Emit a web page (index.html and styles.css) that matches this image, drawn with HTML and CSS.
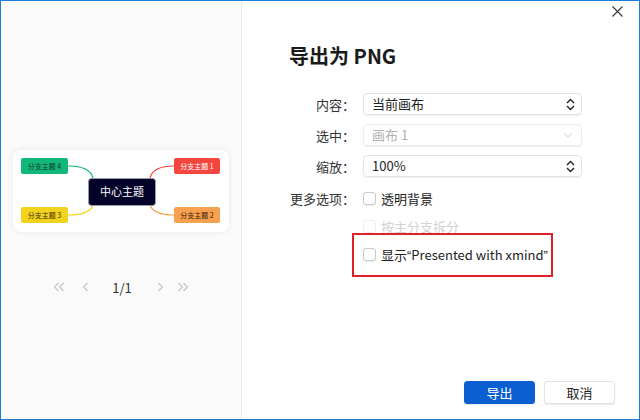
FILE: index.html
```html
<!DOCTYPE html>
<html lang="zh-CN">
<head>
    <meta charset="UTF-8">
    <title>导出为 PNG</title>
    <link rel="stylesheet" href="styles.css">
</head>
<body>
<div class="window">
    <div class="preview">
        <div class="map-card">
            <svg width="216" height="82" viewBox="0 0 216 82">
                <path d="M55 16 C70 16 78 20 80 28" class="link" stroke="#12b87a"/>
                <path d="M55 65 C70 65 78 61 80 55" class="link" stroke="#f3d21e"/>
                <path d="M161 16 C146 16 139 20 137 28" class="link" stroke="#f5453f"/>
                <path d="M161 65 C146 65 139 61 137 55" class="link" stroke="#f7a050"/>

                <rect x="8" y="8" width="47" height="16" rx="2" fill="#12b87a"/>
                <text x="31.5" y="19" class="branch" fill="#143b2a">分支主题 4</text>
                <rect x="8" y="57" width="47" height="16" rx="2" fill="#f3d21e"/>
                <text x="31.5" y="68" class="branch" fill="#3a3000">分支主题 3</text>
                <rect x="161" y="8" width="46" height="16" rx="2" fill="#f5453f"/>
                <text x="184" y="19" class="branch" fill="#fff">分支主题 1</text>
                <rect x="161" y="57" width="46" height="16" rx="2" fill="#f7a050"/>
                <text x="184" y="68" class="branch" fill="#3b2000">分支主题 2</text>

                <rect x="75.5" y="28.5" width="67" height="27" rx="3" fill="#05032a" stroke="#9a9aaa"/>
                <text x="109" y="46" class="center">中心主题</text>
            </svg>
        </div>
        <div class="pager">
            <svg class="pg" width="12" height="10" viewBox="0 0 12 10"><path d="M5.5 1 L1.5 5 L5.5 9 M10.5 1 L6.5 5 L10.5 9"/></svg>
            <svg class="pg" width="8" height="10" viewBox="0 0 8 10"><path d="M5.5 1 L1.5 5 L5.5 9"/></svg>
            <span class="page-num">1/1</span>
            <svg class="pg" width="8" height="10" viewBox="0 0 8 10"><path d="M2.5 1 L6.5 5 L2.5 9"/></svg>
            <svg class="pg" width="12" height="10" viewBox="0 0 12 10"><path d="M1.5 1 L5.5 5 L1.5 9 M6.5 1 L10.5 5 L6.5 9"/></svg>
        </div>
    </div>

    <div class="main">
        <svg class="close" width="11" height="11" viewBox="0 0 11 11"><path d="M0.5 0.5 L10.5 10.5 M10.5 0.5 L0.5 10.5"/></svg>

        <h2 class="title">导出为 PNG</h2>

        <div class="form">
            <div class="row">
                <span class="label">内容：</span>
                <div class="select">
                    <span>当前画布</span>
                    <svg class="updown" width="9" height="13" viewBox="0 0 9 13"><path d="M1 5 L4.5 1.5 L8 5 M1 8 L4.5 11.5 L8 8"/></svg>
                </div>
            </div>
            <div class="row">
                <span class="label">选中：</span>
                <div class="select disabled">
                    <span>画布 1</span>
                    <svg class="down" width="10" height="6" viewBox="0 0 10 6"><path d="M1 1 L5 5 L9 1"/></svg>
                </div>
            </div>
            <div class="row">
                <span class="label">缩放：</span>
                <div class="select">
                    <span>100%</span>
                    <svg class="updown" width="9" height="13" viewBox="0 0 9 13"><path d="M1 5 L4.5 1.5 L8 5 M1 8 L4.5 11.5 L8 8"/></svg>
                </div>
            </div>

            <div class="row check first">
                <span class="label">更多选项：</span>
                <label class="checkbox"><span class="box"></span>透明背景</label>
            </div>
            <div class="row check">
                <span class="label"></span>
                <label class="checkbox disabled"><span class="box"></span>按主分支拆分</label>
            </div>
            <div class="row check">
                <span class="label"></span>
                <label class="checkbox"><span class="box"></span><span>显示<span class="quote">“</span>Presented with xmind<span class="quote">”</span></span></label>
            </div>
        </div>

        <div class="highlight"></div>

        <div class="footer">
            <button class="btn primary">导出</button>
            <button class="btn">取消</button>
        </div>
    </div>
</div>
</body>
</html>
```

FILE: styles.css
```css
body {
    margin: 0;
    font-family: "Noto Sans CJK SC", "Noto Sans", sans-serif;
    color: #222;
}
.window {
    width: 640px;
    height: 420px;
    box-sizing: border-box;
    border: 1px solid #1b7fd6;
    display: flex;
    background-color: #fff;
}
.preview {
    width: 240px;
    background-color: #fafafa;
    border-right: 1px solid #ebebeb;
    display: flex;
    flex-direction: column;
    align-items: center;
}
.map-card {
    margin-top: 149px;
    width: 216px;
    height: 82px;
    background-color: #fff;
    border-radius: 8px;
    box-shadow: 0 0 6px rgba(0, 0, 0, 0.07);
}
.map-card svg {
    display: block;
}
.link {
    fill: none;
    stroke-width: 1.2;
}
.branch {
    font-size: 7px;
    text-anchor: middle;
}
.center {
    font-size: 11px;
    fill: #fff;
    text-anchor: middle;
}
.pager {
    margin-top: 45px;
    height: 20px;
    display: flex;
    align-items: center;
}
.pg {
    fill: none;
    stroke: #c2c2c2;
    stroke-width: 1.1;
}
.pager .pg:nth-child(1) { margin-right: 17px; }
.pager .pg:nth-child(2) { margin-right: 22px; }
.pager .pg:nth-child(4) { margin-left: 24px; margin-right: 13px; }
.page-num {
    font-size: 13px;
    color: #333;
}
.main {
    flex: 1;
    position: relative;
    display: flex;
    flex-direction: column;
    padding: 43px 0 0 47px;
}
.close {
    position: absolute;
    top: 5px;
    right: 16px;
    fill: none;
    stroke: #333;
    stroke-width: 1.1;
}
.title {
    margin: 0;
    font-size: 20px;
    line-height: 24px;
    font-weight: bold;
    color: #1a1a1a;
}
.form {
    margin-top: 25px;
}
.row {
    display: flex;
    align-items: center;
    height: 22px;
    font-size: 13px;
}
.row + .row {
    margin-top: 9px;
}
.row.check {
    margin-top: 6px;
}
.row.check.first {
    margin-top: 10px;
}
.label {
    width: 66px;
    margin-right: 8px;
    text-align: right;
    color: #333;
    flex-shrink: 0;
}
.select {
    width: 219px;
    height: 22px;
    box-sizing: border-box;
    border: 1px solid #e4e4e4;
    border-radius: 4px;
    box-shadow: 0 1px 1px rgba(0, 0, 0, 0.07);
    display: flex;
    align-items: center;
    justify-content: space-between;
    padding: 0 6px 0 8px;
    color: #222;
    line-height: 20px;
}
.select.disabled {
    color: #b0b0b0;
    border-color: #ececec;
}
.updown {
    fill: none;
    stroke: #222;
    stroke-width: 1.4;
}
.down {
    fill: none;
    stroke: #d0d0d0;
    stroke-width: 1;
    margin-right: 2px;
}
.checkbox {
    display: flex;
    align-items: center;
    gap: 5px;
    color: #222;
}
.checkbox.disabled {
    color: #d2d2d2;
}
.quote {
    font-family: "Liberation Sans", sans-serif;
}
.box {
    width: 13px;
    height: 13px;
    box-sizing: border-box;
    border: 1px solid #c9c9c9;
    border-radius: 3px;
    background-color: #fff;
    box-shadow: 0 1px 1px rgba(0, 0, 0, 0.06);
}
.checkbox.disabled .box {
    border-color: #ededed;
    box-shadow: none;
}
.highlight {
    position: absolute;
    left: 110px;
    top: 232px;
    width: 201px;
    height: 44px;
    box-sizing: border-box;
    border: 2px solid #e0202a;
}
.footer {
    margin-top: auto;
    display: flex;
    justify-content: flex-end;
    gap: 9px;
    padding: 0 24px 15px 0;
}
.btn {
    width: 71px;
    height: 23px;
    font-family: "Noto Sans CJK SC", sans-serif;
    font-size: 13px;
    line-height: 21px;
    padding: 0;
    border-radius: 3px;
    border: 1px solid #e2e2e2;
    background-color: #fff;
    color: #222;
    box-shadow: 0 1px 1px rgba(0, 0, 0, 0.08);
}
.btn.primary {
    background-color: #0b5fd0;
    border-color: #0b5fd0;
    color: #fff;
}
```
